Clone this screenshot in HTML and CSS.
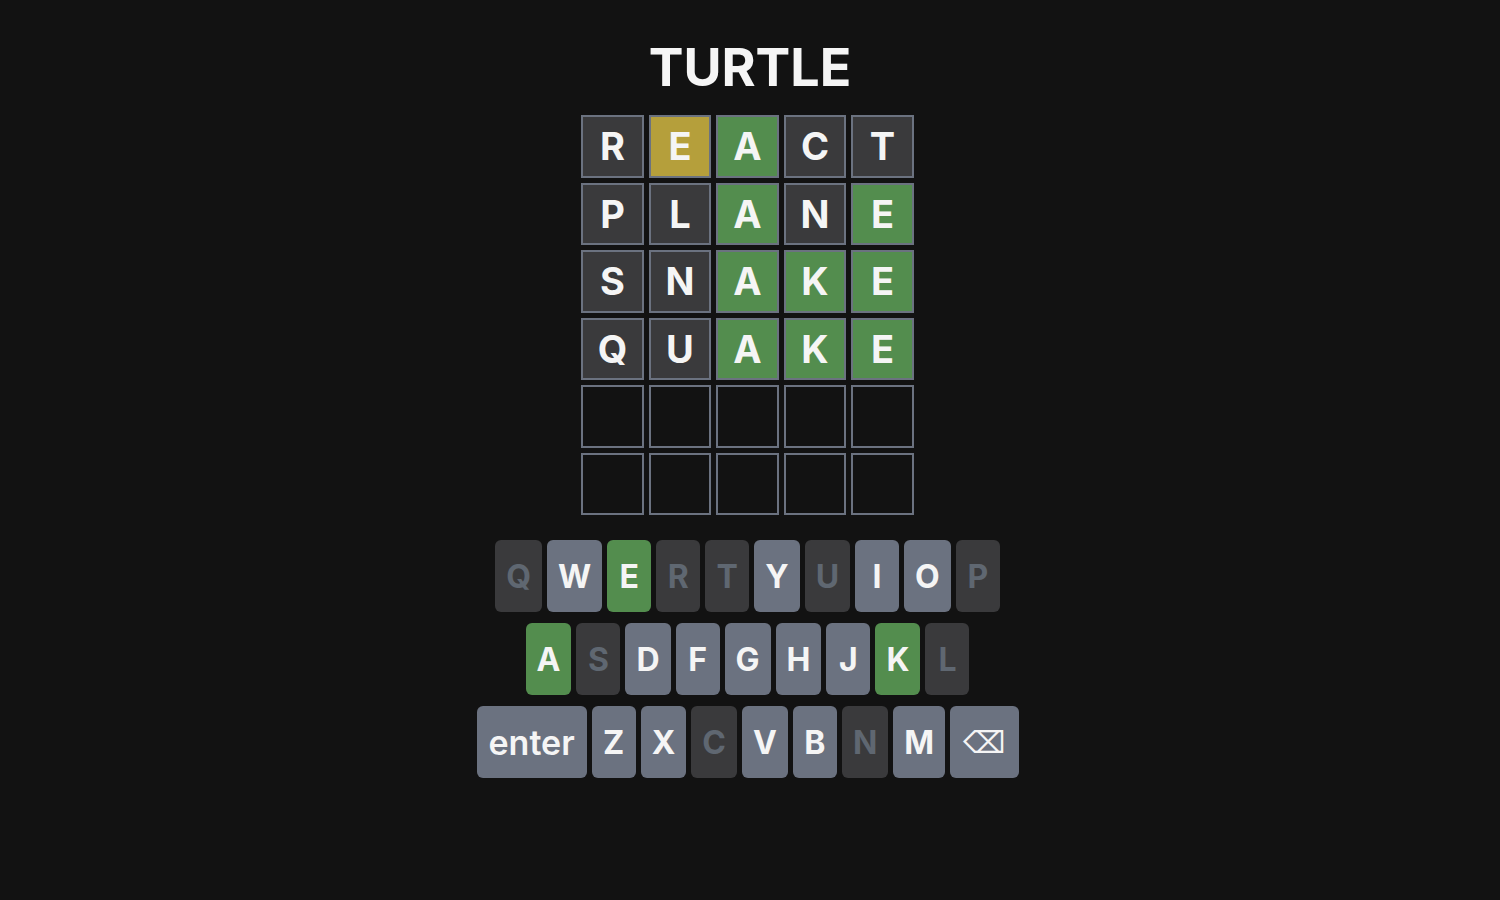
FILE: index.html
```html
<!DOCTYPE html>
<html lang="en">
<head>
<meta charset="utf-8">
<title>Turtle</title>
<link rel="stylesheet" href="styles.css">
</head>
<body>
<main class="app">
  <h1 class="title">TURTLE</h1>
  <div class="board">
    <div class="tile absent">R</div><div class="tile present">E</div><div class="tile correct">A</div><div class="tile absent">C</div><div class="tile absent">T</div>
    <div class="tile absent">P</div><div class="tile absent">L</div><div class="tile correct">A</div><div class="tile absent">N</div><div class="tile correct">E</div>
    <div class="tile absent">S</div><div class="tile absent">N</div><div class="tile correct">A</div><div class="tile correct">K</div><div class="tile correct">E</div>
    <div class="tile absent">Q</div><div class="tile absent">U</div><div class="tile correct">A</div><div class="tile correct">K</div><div class="tile correct">E</div>
    <div class="tile"></div><div class="tile"></div><div class="tile"></div><div class="tile"></div><div class="tile"></div>
    <div class="tile"></div><div class="tile"></div><div class="tile"></div><div class="tile"></div><div class="tile"></div>
  </div>
  <div class="keyboard">
    <div class="krow">
      <button class="key used">Q</button><button class="key">W</button><button class="key hit">E</button><button class="key used">R</button><button class="key used">T</button><button class="key">Y</button><button class="key used">U</button><button class="key">I</button><button class="key">O</button><button class="key used">P</button>
    </div>
    <div class="krow">
      <button class="key hit">A</button><button class="key used">S</button><button class="key">D</button><button class="key">F</button><button class="key">G</button><button class="key">H</button><button class="key">J</button><button class="key hit">K</button><button class="key used">L</button>
    </div>
    <div class="krow">
      <button class="key wide">enter</button><button class="key">Z</button><button class="key">X</button><button class="key used">C</button><button class="key">V</button><button class="key">B</button><button class="key used">N</button><button class="key">M</button><button class="key back">⌫</button>
    </div>
  </div>
</main>
</body>
</html>
```

FILE: styles.css
```css
html, body {
  margin: 0;
  padding: 0;
  background: #121212;
  height: 100%;
}
body {
  font-family: Inter, "Liberation Sans", Arial, sans-serif;
  color: #f4f4f4;
}
.app {
  display: flex;
  flex-direction: column;
  align-items: center;
}
.title {
  margin: 36px 0 0;
  font-size: 52px;
  line-height: 64px;
  font-weight: 700;
  letter-spacing: 0;
  color: #f5f5f5;
}
.board {
  margin: 15px 5px 0 0;
  display: grid;
  grid-template-columns: repeat(5, 62.5px);
  grid-auto-rows: 62.5px;
  gap: 5px;
}
.tile {
  box-sizing: border-box;
  border: 2px solid #6b7280;
  display: flex;
  align-items: center;
  justify-content: center;
  font-size: 38px;
  font-weight: 700;
  color: #f5f5f5;
}
.tile.absent { background: #3a3a3c; }
.tile.present { background: #b59f3b; }
.tile.correct { background: #538d4e; }
.keyboard {
  margin: 25px 5px 0 0;
  display: flex;
  flex-direction: column;
  align-items: center;
  gap: 11px;
}
.krow {
  display: flex;
  gap: 5px;
}
.key {
  box-sizing: border-box;
  height: 72px;
  min-width: 44px;
  padding: 0 11px;
  border: none;
  border-radius: 6px;
  background: #6b7280;
  color: #f5f5f5;
  font-family: Inter, "Liberation Sans", Arial, sans-serif;
  font-size: 32px;
  font-weight: 700;
  display: flex;
  align-items: center;
  justify-content: center;
}
.key.used {
  background: #3a3a3c;
  color: #5f6771;
}
.key.hit {
  background: #538d4e;
}
.key.wide {
  font-weight: 600;
  font-size: 34px;
  padding: 0 12px;
}
.key.back {
  font-family: "DejaVu Sans", sans-serif;
  font-weight: 400;
  font-size: 30px;
  padding: 0 13px;
}
```
